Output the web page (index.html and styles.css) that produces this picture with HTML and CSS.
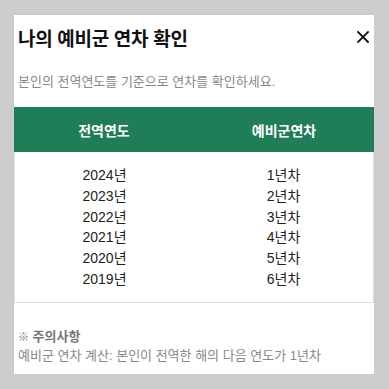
FILE: index.html
```html
<!DOCTYPE html>
<html lang="ko">
<head>
  <meta charset="UTF-8">
  <meta name="viewport" content="width=device-width, initial-scale=1.0">
  <title>나의 예비군 연차 확인</title>
  <link rel="stylesheet" href="styles.css">
</head>
<body>
  <div class="modal">
    <div class="modal-head">
      <div class="title">나의 예비군 연차 확인</div>
      <button class="close" aria-label="닫기">
        <svg width="12" height="12" viewBox="0 0 12 12">
          <path d="M1 1 L11 11 M11 1 L1 11" stroke="#111" stroke-width="1.8" stroke-linecap="square"/>
        </svg>
      </button>
    </div>
    <div class="desc">본인의 전역연도를 기준으로 연차를 확인하세요.</div>

    <div class="table">
      <div class="thead">
        <div>전역연도</div>
        <div>예비군연차</div>
      </div>
      <div class="tbody">
        <div class="row"><div>2024년</div><div>1년차</div></div>
        <div class="row"><div>2023년</div><div>2년차</div></div>
        <div class="row"><div>2022년</div><div>3년차</div></div>
        <div class="row"><div>2021년</div><div>4년차</div></div>
        <div class="row"><div>2020년</div><div>5년차</div></div>
        <div class="row"><div>2019년</div><div>6년차</div></div>
      </div>
    </div>

    <div class="note">
      <div class="note-title"><span class="mark">※</span> 주의사항</div>
      <div class="note-text">예비군 연차 계산: 본인이 전역한 해의 다음 연도가 1년차</div>
    </div>
  </div>
</body>
</html>
```

FILE: styles.css
```css
body {
  margin: 0;
  padding: 15px 15px 15px 14px;
  background-color: #cccccc;
  font-family: 'Liberation Sans', 'Noto Sans CJK KR', sans-serif;
}
.modal {
  background: #fff;
  width: 360px;
  height: 359px;
  box-sizing: border-box;
}
.modal-head {
  height: 44px;
  display: flex;
  justify-content: space-between;
  align-items: center;
  padding: 0 5px 0 4px;
}
.title {
  font-size: 19px;
  font-weight: 700;
  color: #111;
  letter-spacing: -0.3px;
}
.close {
  background: none;
  border: none;
  padding: 0;
  width: 12px;
  height: 12px;
  display: flex;
  cursor: pointer;
}
.desc {
  margin: 13px 0 15px;
  padding-left: 4px;
  line-height: 20px;
  font-size: 13px;
  color: #888;
}
.thead {
  display: grid;
  grid-template-columns: 1fr 1fr;
  height: 45px;
  align-items: center;
  background-color: #1f7d58;
  color: #fff;
  font-weight: 700;
  font-size: 14px;
  text-align: center;
}
.tbody {
  border: 1px solid #ddd;
  border-top: none;
  padding: 13px 0 12px;
}
.row {
  display: grid;
  grid-template-columns: 1fr 1fr;
  height: 20.8px;
  line-height: 20.8px;
  font-size: 14px;
  color: #222;
  text-align: center;
}
.note {
  margin-top: 25px;
  padding-left: 4px;
  font-size: 13px;
}
.note-title {
  line-height: 18px;
  font-weight: 700;
  color: #777;
}
.note-title .mark {
  font-weight: 400;
  font-size: 11px;
}
.note-text {
  line-height: 20px;
  color: #888;
}
```
